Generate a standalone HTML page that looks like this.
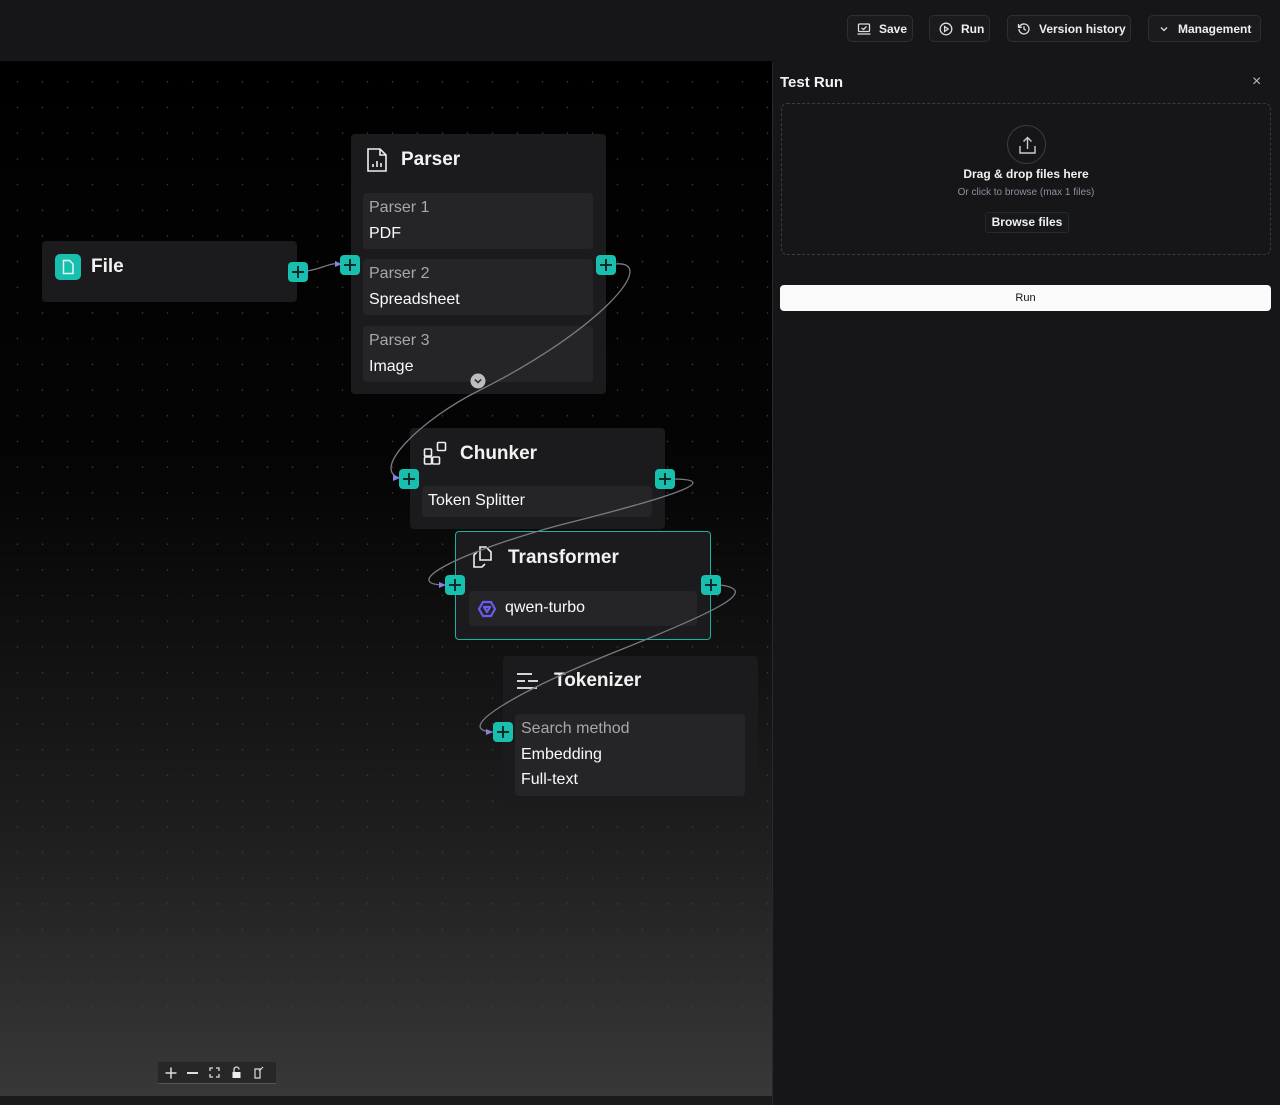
<!DOCTYPE html>
<html><head><meta charset="utf-8"><style>
*{box-sizing:border-box;margin:0;padding:0}
body{width:1280px;height:1105px;background:#161618;font-family:"Liberation Sans",sans-serif;color:#f2f2f2;position:relative;overflow:hidden}
.top{position:absolute;left:0;top:0;width:1280px;height:60px;background:#161618}
.btn{position:absolute;top:15px;height:27px;border:1px solid #2e2e32;border-radius:5px;background:#1b1b1e;font-size:12px;font-weight:bold;color:#eee;display:flex;align-items:center;padding:0 9px;gap:8px;white-space:nowrap}
.btn svg{flex-shrink:0}
.canvas{position:absolute;left:0;top:61px;width:772px;height:1035px;background:linear-gradient(180deg,#000 0%,#050505 40%,#1e1e1e 75%,#383838 100%);overflow:hidden}
.dots{position:absolute;inset:0;background-image:radial-gradient(circle,#3a3a3a 0.6px,transparent 1px);background-size:25px 25.7px;background-position:5px 8px}
.bottom{position:absolute;left:0;top:1096px;width:772px;height:9px;background:#1a1a1a}
.node{position:absolute;background:#1b1b1d;border-radius:4px}
.title{position:absolute;font-size:19px;font-weight:bold;color:#f2f2f2}
.item{position:absolute;background:#252528;border-radius:4px;font-size:16px;color:#fafafa}
.lab{color:#a8a8a8}
.h{position:absolute;width:20px;height:20px;background:#18bfae;border-radius:4px}
.h:before{content:"";position:absolute;left:4px;top:9px;width:12px;height:1.6px;background:#0a2a28}
.h:after{content:"";position:absolute;left:9.2px;top:4px;width:1.6px;height:12px;background:#0a2a28}
.panel{position:absolute;left:772px;top:63px;width:506px;height:1042px;background:#161618;border-left:1px solid #2a2a2d}
</style></head><body>
<div class="top"></div>
<div class="btn" style="left:847px;width:66px"><svg width="14" height="12" viewBox="0 0 14 12" fill="none" stroke="#ddd" stroke-width="1.3"><rect x="1.5" y="1" width="11" height="7.5" rx="1"/><path d="M0.5 11h13M4.5 5l2 1.5 3-3"/></svg>Save</div>
<div class="btn" style="left:929px;width:61px"><svg width="14" height="14" viewBox="0 0 14 14" fill="none" stroke="#ddd" stroke-width="1.3"><circle cx="7" cy="7" r="5.8"/><path d="M5.6 4.6v4.8L9.2 7z"/></svg>Run</div>
<div class="btn" style="left:1007px;width:124px"><svg width="14" height="14" viewBox="0 0 14 14" fill="none" stroke="#ddd" stroke-width="1.3"><path d="M2 7a5 5 0 1 0 1.5-3.6L1.5 5.3M1.5 2v3.3h3.3M7 4.2V7l2 1.4"/></svg>Version history</div>
<div class="btn" style="left:1148px;width:113px"><svg width="12" height="12" viewBox="0 0 12 12" fill="none" stroke="#ddd" stroke-width="1.3"><path d="M3 4.5l3 3 3-3"/></svg>Management</div>

<div class="canvas"><div class="dots"></div></div>
<div class="bottom"></div>

<div class="node" style="left:42px;top:241px;width:255px;height:61px"></div>
<div style="position:absolute;left:55px;top:254px;width:26px;height:26px;background:#18bfae;border-radius:5px"><svg width="26" height="26" viewBox="0 0 26 26" fill="none" stroke="#e8fffb" stroke-width="1.4"><path d="M8.5 6.5h6l3.5 3.5v9.5h-9.5z"/></svg></div>
<div class="title" style="left:91px;top:256px">File</div>

<div class="node" style="left:351px;top:134px;width:255px;height:260px"></div>
<svg style="position:absolute;left:366px;top:147px" width="22" height="26" viewBox="0 0 22 26" fill="none" stroke="#eee" stroke-width="1.6"><path d="M2 2h12l6 6v16H2z"/><path d="M14 2v6h6M7 20v-3M11 20v-6M15 20v-4"/></svg>
<div class="title" style="left:401px;top:149px">Parser</div>
<div class="item" style="left:363px;top:193px;width:230px;height:56px"><div class="lab" style="position:absolute;left:6px;top:6px">Parser 1</div><div style="position:absolute;left:6px;top:32px">PDF</div></div>
<div class="item" style="left:363px;top:259px;width:230px;height:56px"><div class="lab" style="position:absolute;left:6px;top:6px">Parser 2</div><div style="position:absolute;left:6px;top:32px">Spreadsheet</div></div>
<div class="item" style="left:363px;top:326px;width:230px;height:56px"><div class="lab" style="position:absolute;left:6px;top:6px">Parser 3</div><div style="position:absolute;left:6px;top:32px">Image</div></div>

<div class="node" style="left:410px;top:428px;width:255px;height:101px"></div>
<svg style="position:absolute;left:423px;top:441px" width="25" height="25" viewBox="0 0 25 25" fill="none" stroke="#eee" stroke-width="1.6"><rect x="1.5" y="8" width="7" height="7" rx="1"/><rect x="1.5" y="16" width="7" height="7" rx="1"/><rect x="9.5" y="16" width="7" height="7" rx="1"/><rect x="14.5" y="1.5" width="8" height="8" rx="1"/></svg>
<div class="title" style="left:460px;top:443px">Chunker</div>
<div class="item" style="left:422px;top:486px;width:230px;height:31px"><div style="position:absolute;left:6px;top:6px">Token Splitter</div></div>

<div class="node" style="left:455px;top:531px;width:256px;height:109px;border:1.5px solid #19b3a4"></div>
<svg style="position:absolute;left:470px;top:545px" width="24" height="25" viewBox="0 0 24 25" fill="none" stroke="#eee" stroke-width="1.6"><path d="M10 2h6l5 5v8h-11z"/><path d="M7 7l-3 3v6M4 13v9h8l3-3"/></svg>
<div class="title" style="left:508px;top:547px">Transformer</div>
<div class="item" style="left:469px;top:591px;width:228px;height:35px"><svg style="position:absolute;left:7px;top:7px" width="22" height="22" viewBox="0 0 22 22" fill="none" stroke="#6a5cf0" stroke-width="2.2" stroke-linejoin="round"><path d="M7 4h8l4 7-4 7H7l-4-7z"/><path d="M8 9h6l-3 5z"/></svg><div style="position:absolute;left:36px;top:8px">qwen-turbo</div></div>

<div class="node" style="left:503px;top:656px;width:255px;height:153px"></div>
<svg style="position:absolute;left:516px;top:672px" width="24" height="18" viewBox="0 0 24 18" fill="none" stroke="#eee" stroke-width="1.8"><path d="M1 2h15M1 9h8M12 9h10M1 16h20"/></svg>
<div class="title" style="left:554px;top:670px">Tokenizer</div>
<div class="item" style="left:515px;top:714px;width:230px;height:82px"><div class="lab" style="position:absolute;left:6px;top:6px">Search method</div><div style="position:absolute;left:6px;top:32px">Embedding</div><div style="position:absolute;left:6px;top:57px">Full-text</div></div>

<svg style="position:absolute;left:0;top:0" width="772" height="1096" fill="none" stroke="#7a7a86" stroke-width="1.3">
<path d="M307 271 C325 268,330 262,342 264"/>
<path d="M615 264 C660 260,600 330,480 390 C420 420,370 470,400 478"/>
<path d="M675 479 C720 480,680 495,560 525 C450 555,400 585,446 585"/>
<path d="M720 585 C760 590,720 610,620 650 C520 690,450 730,493 732"/>
</svg>
<svg style="position:absolute;left:0;top:0" width="772" height="1096" fill="#8b7fe0">
<path d="M335 261l7 3-7 3z"/><path d="M393 475l7 3-7 3z"/><path d="M439 582l7 3-7 3z"/><path d="M486 729l7 3-7 3z"/>
</svg>
<svg style="position:absolute;left:470px;top:373px" width="16" height="16" viewBox="0 0 16 16"><circle cx="8" cy="8" r="7.5" fill="#bdbdbd"/><path d="M4.8 6.5L8 9.5l3.2-3" stroke="#333" stroke-width="1.6" fill="none"/></svg>

<div class="h" style="left:288px;top:262px"></div>
<div class="h" style="left:340px;top:255px"></div>
<div class="h" style="left:596px;top:255px"></div>
<div class="h" style="left:399px;top:469px"></div>
<div class="h" style="left:655px;top:469px"></div>
<div class="h" style="left:445px;top:575px"></div>
<div class="h" style="left:701px;top:575px"></div>
<div class="h" style="left:493px;top:722px"></div>

<div style="position:absolute;left:158px;top:1062px;width:118px;height:22px;background:#272727;border-bottom:1px solid #555"></div>
<svg style="position:absolute;left:165px;top:1067px" width="12" height="12" stroke="#ddd" stroke-width="1.5"><path d="M6 0.5v11M0.5 6h11"/></svg>
<div style="position:absolute;left:187px;top:1072px;width:11px;height:1.5px;background:#ddd"></div>
<svg style="position:absolute;left:209px;top:1067px" width="11" height="11" fill="none" stroke="#ddd" stroke-width="1.3"><path d="M1 4V1h3M7 1h3v3M10 7v3H7M4 10H1V7"/></svg>
<svg style="position:absolute;left:231px;top:1066px" width="11" height="13"><path d="M3 6V3.5a2.5 2.5 0 0 1 5 0" stroke="#ddd" fill="none" stroke-width="1.3"/><rect x="1.5" y="6" width="8" height="6" fill="#eee"/></svg>
<svg style="position:absolute;left:253px;top:1066px" width="11" height="13" fill="none" stroke="#ddd" stroke-width="1.2"><path d="M2 3h5v9H2zM6 5l4-4"/></svg>

<div class="panel">
<div style="position:absolute;left:7px;top:11px;font-size:15px;font-weight:bold">Test Run</div>
<div style="position:absolute;left:479px;top:10px;font-size:16px;color:#bbb">×</div>
<div style="position:absolute;left:8px;top:40px;width:490px;height:152px;border:1.3px dashed #3a3a3f;border-radius:6px">
<div style="position:absolute;left:225px;top:21px;width:39px;height:39px;border:1px solid #3c3c42;border-radius:50%"><svg width="39" height="39" viewBox="0 0 39 39" fill="none" stroke="#ccc" stroke-width="1.4"><path d="M19.5 12v11M15.5 15.5l4-4 4 4M12 20v7h15v-7"/></svg></div>
<div style="position:absolute;left:0;width:100%;top:63px;text-align:center;font-size:12px;font-weight:bold">Drag &amp; drop files here</div>
<div style="position:absolute;left:0;width:100%;top:83px;text-align:center;font-size:10px;color:#8a90a0">Or click to browse (max 1 files)</div>
<div style="position:absolute;left:203px;top:108px;width:84px;height:21px;background:#17181c;border:1px solid #252733;border-radius:3px;font-size:12px;font-weight:bold;text-align:center;line-height:19px">Browse files</div>
</div>
<div style="position:absolute;left:7px;top:222px;width:491px;height:26px;background:#fafafa;border-radius:4px;color:#111;font-size:11px;text-align:center;line-height:26px">Run</div>
</div>
</body></html>
